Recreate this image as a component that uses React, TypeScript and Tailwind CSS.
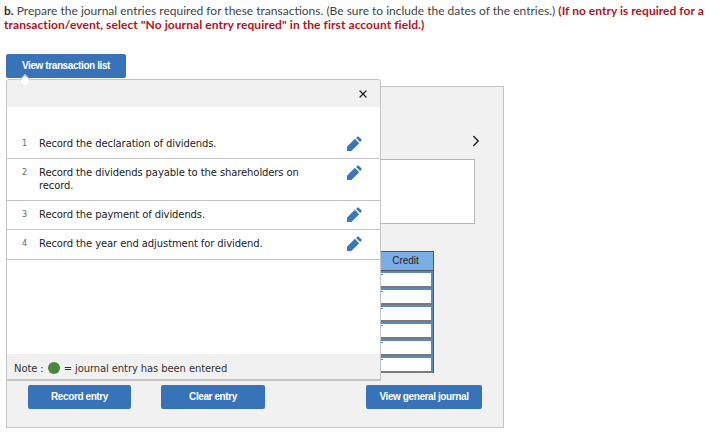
import { X, ChevronRight } from 'lucide-react';

const transactions = [
  { id: 1, text: 'Record the declaration of dividends.' },
  { id: 2, text: 'Record the dividends payable to the shareholders on record.' },
  { id: 3, text: 'Record the payment of dividends.' },
  { id: 4, text: 'Record the year end adjustment for dividend.' },
];

function EditIcon() {
  return (
    <svg viewBox="0 0 24 24" className="w-[15px] h-[15px] fill-[#3a76ba]">
      <path d="M0 24v-7L12.5 4.5l7 7L7 24zM14.5 3 16.5 1a1.6 1.6 0 0 1 2.2 0l4.3 4.3a1.6 1.6 0 0 1 0 2.2l-2 2z" />
    </svg>
  );
}

function BlueButton({ label, className }: { label: string; className: string }) {
  return (
    <button className={`h-6 bg-[#3873b9] rounded-[2px] text-white text-[10px] pb-[1px] font-bold tracking-[-0.4px] font-['Liberation_Sans',sans-serif] ${className}`}>
      {label}
    </button>
  );
}

export default function App() {
  return (
    <div className="relative w-[720px] h-[436px] bg-white overflow-hidden font-['Lato',sans-serif]">
      <div className="pl-1 pt-[4px] text-[12px] leading-[14px] text-[#444] whitespace-nowrap">
        <p>
          <b className="text-[#333]">b.</b> Prepare the journal entries required for these transactions. (Be sure to include the dates of the entries.){' '}
          <b className="text-[#b5121b] tracking-[0.03px]">(If no entry is required for a</b>
        </p>
        <p className="font-bold text-[#b5121b] tracking-[0.07px]">transaction/event, select "No journal entry required" in the first account field.)</p>
      </div>

      <BlueButton label="View transaction list" className="block w-[120px] ml-[6px] mt-[22px]" />

      {/* work area behind the popup */}
      <div className="ml-[6px] mt-[8px] w-[498px] h-[342px] bg-[#f1f1f1] border border-[#c4c4c4] flex flex-col items-end">
        <ChevronRight className="w-[18px] h-[18px] text-[#222] mt-[45px] mr-[18px]" strokeWidth={2} />
        <div className="w-[300px] h-[65px] mt-[9px] mr-[28px] bg-white border border-[#b5b5b5]" />
        <div className="w-[120px] mt-[27px] mr-[69px] border-r border-t border-[#555]">
          <div className="h-[19px] bg-[#7aaee8] text-[10px] leading-[18px] text-center pl-[64px] text-[#222] font-['Liberation_Sans',sans-serif] border-b border-[#555]">
            Credit
          </div>
          {[0, 1, 2, 3, 4, 5].map((i) => (
            <div key={i} className="relative h-[17px] bg-white border-2 border-[#5f88bb] border-b-[#7a7a7a]">
              <span className="absolute left-[65px] top-[1px] w-[2px] h-[1px] bg-[#5f88bb]" />
            </div>
          ))}
        </div>
        <div className="w-full flex pl-[21px] mt-auto mb-[18px]">
          <BlueButton label="Record entry" className="w-[103px]" />
          <BlueButton label="Clear entry" className="w-[104px] ml-[30px]" />
          <BlueButton label="View general journal" className="w-[116px] ml-[101px]" />
        </div>
      </div>

      {/* transaction list popup */}
      <div className="absolute left-[6px] top-[79px] w-[375px] h-[302px] bg-white border border-[#c4c4c4] rounded-t-[3px] flex flex-col font-['DejaVu_Sans',sans-serif] text-[10px] leading-[13px] tracking-[-0.1px] text-[#222]">
        <div className="absolute left-[14px] -top-[4px] w-[8px] h-[8px] rotate-45 bg-white border-l border-t border-[#c4c4c4]" />
        <div className="h-[27px] bg-[#f1f1f1] flex justify-end items-center pr-[11px] rounded-t-[3px]">
          <X className="w-[12px] h-[12px] text-[#222]" strokeWidth={2.5} />
        </div>
        <ul className="mt-[23px]">
          {transactions.map((t) => (
            <li key={t.id} className="flex pt-[7px] pb-[8px] last:pb-[9px] border-b border-[#c4c4c4] pl-[15px] pr-[18px]">
              <span className="w-[17px] shrink-0 text-[8px] text-[#666]">{t.id}</span>
              <span className="w-[268px]">{t.text}</span>
              <span className="ml-auto h-[13px] flex items-center"><EditIcon /></span>
            </li>
          ))}
        </ul>
        <div className="mt-auto h-[26px] bg-[#f1f1f1] flex items-center pt-[3px] pl-[7px] text-[10px] text-[#333] border-b border-[#c4c4c4]">
          Note :
          <span className="w-[12px] h-[12px] rounded-full bg-[#4c8540] mx-[4px]" />
          = journal entry has been entered
        </div>
      </div>
    </div>
  );
}
